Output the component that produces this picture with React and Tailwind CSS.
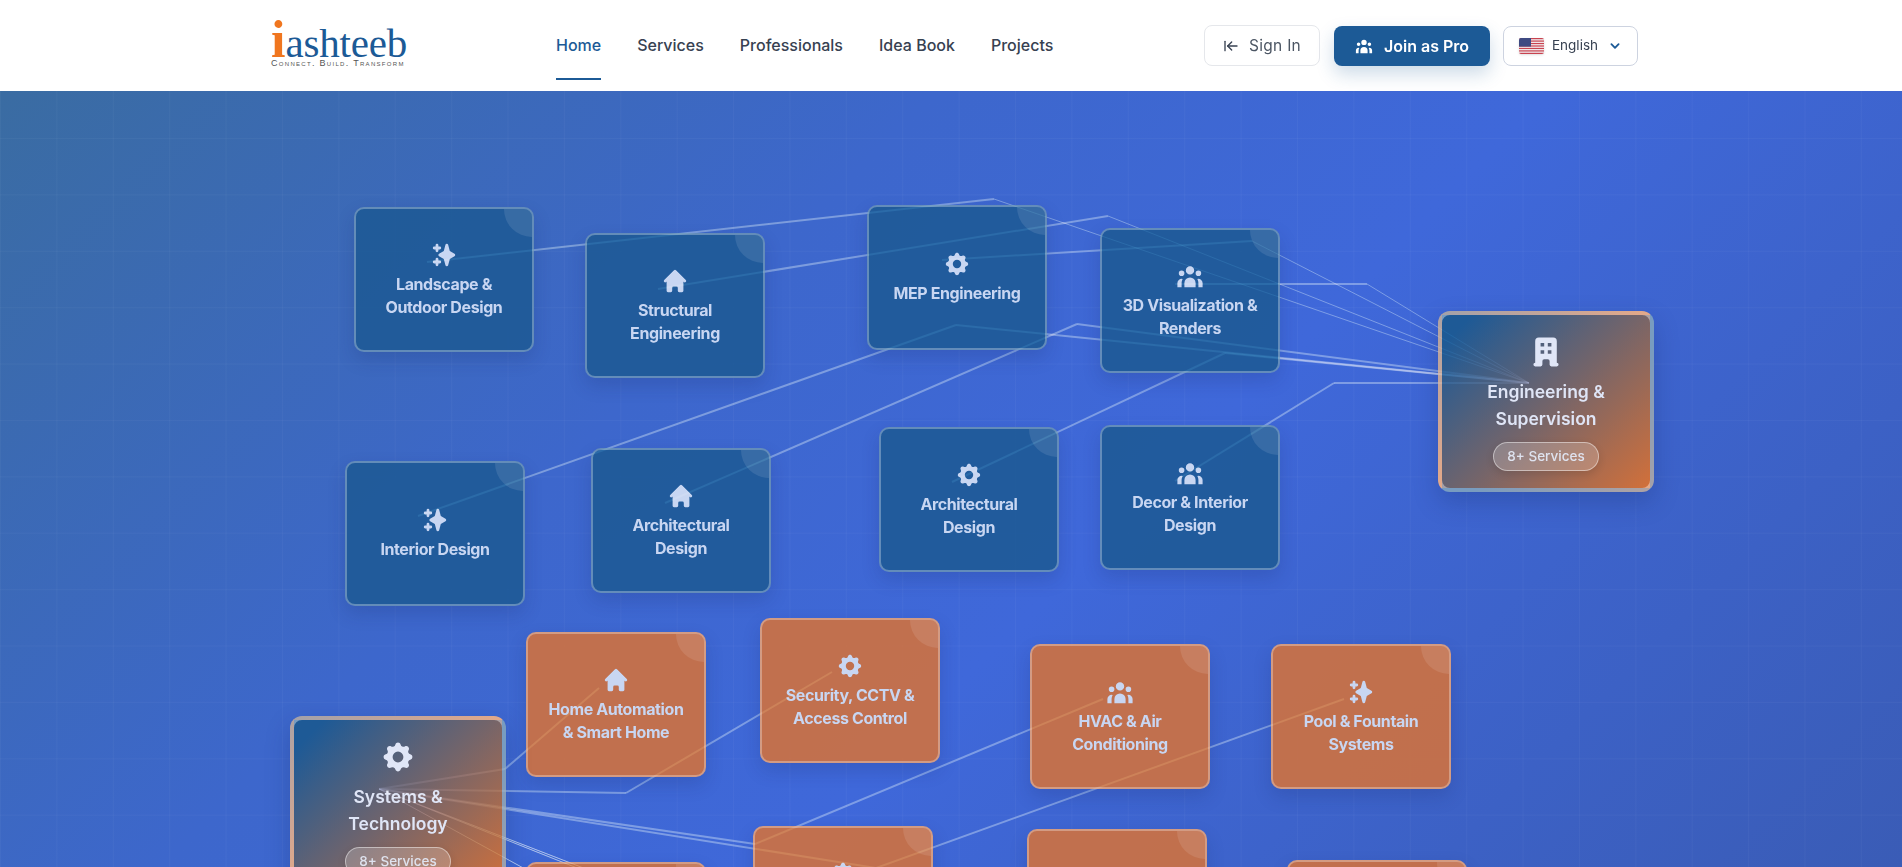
import React from 'react';
import { ArrowLeftToLine } from 'lucide-react';
import { HiSparkles, HiHome, HiCog, HiUserGroup, HiOfficeBuilding, HiChevronDown } from 'react-icons/hi';

const NAV = ['Home', 'Services', 'Professionals', 'Idea Book', 'Projects'];

const blueCards = [
  { name: 'Landscape & Outdoor Design', icon: HiSparkles, pos: 'left-[354px] top-[116px]' },
  { name: 'Structural Engineering', icon: HiHome, pos: 'left-[585px] top-[142px]' },
  { name: 'MEP Engineering', icon: HiCog, pos: 'left-[867px] top-[114px]' },
  { name: '3D Visualization & Renders', icon: HiUserGroup, pos: 'left-[1100px] top-[137px]' },
  { name: 'Interior Design', icon: HiSparkles, pos: 'left-[345px] top-[370px]' },
  { name: 'Architectural Design', icon: HiHome, pos: 'left-[591px] top-[357px]' },
  { name: 'Architectural Design', icon: HiCog, pos: 'left-[879px] top-[336px]' },
  { name: 'Decor & Interior Design', icon: HiUserGroup, pos: 'left-[1100px] top-[334px]' },
];

// the last four run off the bottom of the window, only their top edge shows
const orangeCards = [
  { name: 'Home Automation & Smart Home', icon: HiHome, pos: 'left-[526px] top-[541px]' },
  { name: 'Security, CCTV & Access Control', icon: HiCog, pos: 'left-[760px] top-[527px]' },
  { name: 'HVAC & Air Conditioning', icon: HiUserGroup, pos: 'left-[1030px] top-[553px]' },
  { name: 'Pool & Fountain Systems', icon: HiSparkles, pos: 'left-[1271px] top-[553px]' },
  { icon: HiSparkles, pos: 'left-[526px] top-[771px]' },
  { icon: HiCog, pos: 'left-[753px] top-[735px]' },
  { icon: HiUserGroup, pos: 'left-[1027px] top-[738px]' },
  { icon: HiHome, pos: 'left-[1287px] top-[769px]' },
];

// node point, bend, hub point; page coordinates
const ENG = '1529,383';
const SYS = '379,789';
const lines = [
  ['427,262 994,199', ENG, 2, 1],
  ['658,289 1108,216', ENG, 2, 1],
  ['942,260 1252,241', ENG, 2, 1],
  ['1175,284 1367,284', ENG, 2, 1],
  ['418,516 956,325', ENG, 2, 2],
  ['665,503 1077,324', ENG, 2, 2],
  ['952,482 1225,353', ENG, 2, 2],
  ['1175,481 1334,383', ENG, 2, 2],
  ['599,688 505,769', SYS, 2, 2],
  ['832,672 626,793', SYS, 2, 2],
  ['1103,699 755,844', SYS, 2, 2],
  ['1344,699 876,868', SYS, 2, 2],
  ['379,789 600,910', SYS, 1, 1],
  ['379,789 700,913', SYS, 1, 1],
  ['379,789 720,925', SYS, 1, 1],
];

function Flag() {
  return (
    <svg width="25" height="16" viewBox="0 0 25 16" className="shrink-0 rounded-[2px] shadow-sm">
      <rect width="25" height="16" fill="#f3f4f6" />
      {[0, 2.46, 4.92, 7.38, 9.84, 12.3, 14.76].map((y) => (
        <rect key={y} y={y} width="25" height="1.24" fill="#c8434f" />
      ))}
      <rect width="12" height="8.6" fill="#3e4a82" />
    </svg>
  );
}

function Logo() {
  return (
    <div className="mb-[6px] flex w-[285px] shrink-0 flex-col pt-[1px]">
      <div className="flex h-[36px] items-baseline font-['Liberation_Serif',serif] leading-none text-[#1c5a96]">
        <span className="text-[52px] font-bold leading-[42px] text-[#f0761f]">i</span>
        <span className="text-[41px] leading-[42px] tracking-[-0.2px]">ashteeb</span>
      </div>
      <div className="mt-[4px] font-['Liberation_Sans',sans-serif] text-[9px] leading-[8px] tracking-[1.3px] text-[#555] [font-variant:small-caps]">
        Connect. Build. Transform
      </div>
    </div>
  );
}

function Header() {
  return (
    <header className="relative z-10 flex h-[91px] items-center bg-white pl-[271px] pr-[264px] font-['Inter',sans-serif]">
      <Logo />
      <nav className="flex h-full items-center gap-9 pb-[2px]">
        {NAV.map((item, i) => (
          <a
            key={item}
            className={
              i === 0
                ? 'relative flex h-full items-center text-base font-medium text-[#1c5a96]'
                : 'text-base font-medium text-[#374151]'
            }
          >
            {item}
            {i === 0 && <span className="absolute bottom-[9px] left-0 h-[2px] w-full bg-[#1c5a96]" />}
          </a>
        ))}
      </nav>
      <div className="ml-auto flex items-center">
        <button className="flex h-[41px] w-[116px] items-center justify-center gap-[10px] rounded-lg border border-gray-200 bg-white text-[15.5px] tracking-[0.3px] text-[#4b5563]">
          <ArrowLeftToLine className="h-4 w-4 text-[#374151]" strokeWidth={2} />
          Sign In
        </button>
        <button className="ml-[14px] flex h-10 w-[156px] items-center justify-center gap-[11px] rounded-lg bg-[#1c5a96] text-base font-semibold text-white shadow-[0_8px_18px_rgba(28,90,150,0.22)]">
          <HiUserGroup className="h-[18px] w-[18px]" />
          Join as Pro
        </button>
        <button className="ml-[13px] flex h-10 w-[135px] items-center gap-2 rounded-lg border border-[#cdd3e0] bg-white pl-[15px] text-[13.5px] text-[#374151]">
          <Flag />
          English
          <HiChevronDown className="h-[18px] w-[18px] text-[#1c5a96]" />
        </button>
      </div>
    </header>
  );
}

function Card({ name, icon: Icon, pos, bg }) {
  return (
    <div
      className={`absolute ${pos} ${bg} flex h-[145px] w-[180px] flex-col items-center justify-center overflow-hidden rounded-[10px] border-2 border-white/30 px-3.5 text-center shadow-[0_8px_18px_rgba(20,40,100,0.18)]`}
    >
      <span className="absolute right-0 top-0 h-[28px] w-[28px] rounded-bl-full bg-white/10" />
      <Icon className="h-7 w-7 shrink-0 text-[#c8d6f2]" />
      {name ? (
        <div className="mt-1 text-base font-bold leading-[22.5px] tracking-[-0.4px] text-[#c8d6f2]">{name}</div>
      ) : (
        <div className="mt-1 h-[45px]" />
      )}
    </div>
  );
}

function Hub({ title, icon: Icon, pos }) {
  return (
    <div
      className={`absolute ${pos} flex h-[181px] w-[216px] flex-col items-center rounded-xl border-[4px] border-white/40 bg-[linear-gradient(135deg,#1e5a96_8%,#d2703a_100%)] px-4 pt-[19px] text-center shadow-[0_10px_24px_rgba(20,40,100,0.25)]`}
    >
      <Icon className="h-9 w-9 shrink-0 text-[#e0e6f7]" />
      <div className="mt-[8px] w-[130px] text-[17.5px] font-semibold leading-[27px] text-[#dfe5f6]">{title}</div>
      <span className="mt-[10px] flex h-[29px] w-[106px] shrink-0 items-center justify-center rounded-full border border-white/45 bg-white/20 text-[13.5px] font-medium text-[#dfe3ef] shadow-[0_3px_8px_rgba(0,0,0,0.12)]">
        8+ Services
      </span>
    </div>
  );
}

function Connections({ className, opacity }) {
  return (
    <svg viewBox="0 91 1902 776" className={`absolute inset-0 h-full w-full ${className}`} fill="none">
      {lines.map(([head, hub, w1, w2], i) => {
        const pts = head.split(' ');
        return (
          <g key={i} stroke="#ffffff" strokeOpacity={opacity}>
            <polyline points={head} strokeWidth={w1} />
            <line
              x1={pts[1].split(',')[0]}
              y1={pts[1].split(',')[1]}
              x2={hub.split(',')[0]}
              y2={hub.split(',')[1]}
              strokeWidth={w2}
            />
          </g>
        );
      })}
    </svg>
  );
}

export default function App() {
  return (
    <div className="h-[867px] w-full overflow-hidden font-['Inter',sans-serif]">
      <Header />
      <section className="relative h-[776px] overflow-hidden bg-[linear-gradient(135deg,#3a6ca2_0%,#3d67cc_35%,#3f68da_58%,#3a5cb6_100%)]">
        <div className="absolute inset-0 bg-[linear-gradient(rgba(255,255,255,0.03)_1px,transparent_1px),linear-gradient(90deg,rgba(255,255,255,0.03)_1px,transparent_1px)] bg-[size:56.4px_56.4px] bg-[position:0_47px]" />
        <Connections className="" opacity="0.26" />
        {blueCards.map((c) => (
          <Card key={c.pos} {...c} bg="bg-[#1e5a96]/90" />
        ))}
        {orangeCards.map((c) => (
          <Card key={c.pos} {...c} bg="bg-[#cf713f]/90" />
        ))}
        <Hub title="Engineering & Supervision" icon={HiOfficeBuilding} pos="left-[1438px] top-[220px]" />
        <Hub title="Systems & Technology" icon={HiCog} pos="left-[290px] top-[625px]" />
        {/* lines show through the cards, tinted by what lies under them */}
        <Connections className="pointer-events-none mix-blend-overlay" opacity="0.12" />
      </section>
    </div>
  );
}
